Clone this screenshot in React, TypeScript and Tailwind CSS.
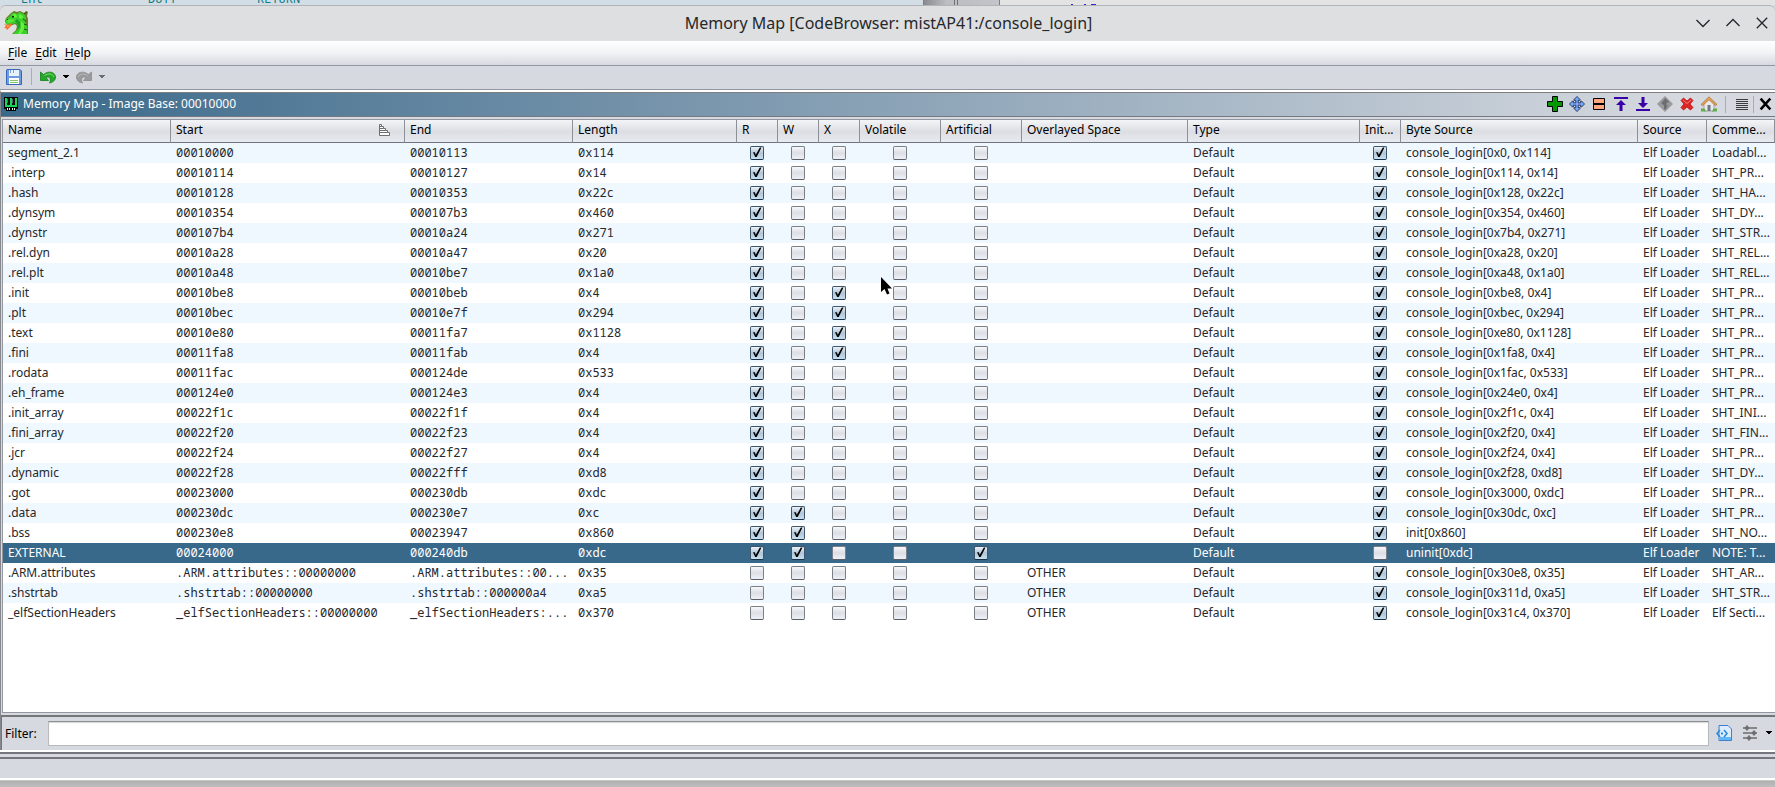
import React from "react";

type Row = {
  name: string;
  start: string;
  end: string;
  length: string;
  flags: string;
  space?: string;
  bytes: string;
  comment: string;
};

// flags: one letter for each ticked box (r, w, x, v = volatile, a = artificial, i = initialized)
const rows: Row[] = [
  { name: "segment_2.1", start: "00010000", end: "00010113", length: "0x114", flags: "ri", bytes: "console_login[0x0, 0x114]", comment: "Loadabl..." },
  { name: ".interp", start: "00010114", end: "00010127", length: "0x14", flags: "ri", bytes: "console_login[0x114, 0x14]", comment: "SHT_PR..." },
  { name: ".hash", start: "00010128", end: "00010353", length: "0x22c", flags: "ri", bytes: "console_login[0x128, 0x22c]", comment: "SHT_HA..." },
  { name: ".dynsym", start: "00010354", end: "000107b3", length: "0x460", flags: "ri", bytes: "console_login[0x354, 0x460]", comment: "SHT_DY..." },
  { name: ".dynstr", start: "000107b4", end: "00010a24", length: "0x271", flags: "ri", bytes: "console_login[0x7b4, 0x271]", comment: "SHT_STR..." },
  { name: ".rel.dyn", start: "00010a28", end: "00010a47", length: "0x20", flags: "ri", bytes: "console_login[0xa28, 0x20]", comment: "SHT_REL..." },
  { name: ".rel.plt", start: "00010a48", end: "00010be7", length: "0x1a0", flags: "ri", bytes: "console_login[0xa48, 0x1a0]", comment: "SHT_REL..." },
  { name: ".init", start: "00010be8", end: "00010beb", length: "0x4", flags: "rxi", bytes: "console_login[0xbe8, 0x4]", comment: "SHT_PR..." },
  { name: ".plt", start: "00010bec", end: "00010e7f", length: "0x294", flags: "rxi", bytes: "console_login[0xbec, 0x294]", comment: "SHT_PR..." },
  { name: ".text", start: "00010e80", end: "00011fa7", length: "0x1128", flags: "rxi", bytes: "console_login[0xe80, 0x1128]", comment: "SHT_PR..." },
  { name: ".fini", start: "00011fa8", end: "00011fab", length: "0x4", flags: "rxi", bytes: "console_login[0x1fa8, 0x4]", comment: "SHT_PR..." },
  { name: ".rodata", start: "00011fac", end: "000124de", length: "0x533", flags: "ri", bytes: "console_login[0x1fac, 0x533]", comment: "SHT_PR..." },
  { name: ".eh_frame", start: "000124e0", end: "000124e3", length: "0x4", flags: "ri", bytes: "console_login[0x24e0, 0x4]", comment: "SHT_PR..." },
  { name: ".init_array", start: "00022f1c", end: "00022f1f", length: "0x4", flags: "ri", bytes: "console_login[0x2f1c, 0x4]", comment: "SHT_INI..." },
  { name: ".fini_array", start: "00022f20", end: "00022f23", length: "0x4", flags: "ri", bytes: "console_login[0x2f20, 0x4]", comment: "SHT_FIN..." },
  { name: ".jcr", start: "00022f24", end: "00022f27", length: "0x4", flags: "ri", bytes: "console_login[0x2f24, 0x4]", comment: "SHT_PR..." },
  { name: ".dynamic", start: "00022f28", end: "00022fff", length: "0xd8", flags: "ri", bytes: "console_login[0x2f28, 0xd8]", comment: "SHT_DY..." },
  { name: ".got", start: "00023000", end: "000230db", length: "0xdc", flags: "ri", bytes: "console_login[0x3000, 0xdc]", comment: "SHT_PR..." },
  { name: ".data", start: "000230dc", end: "000230e7", length: "0xc", flags: "rwi", bytes: "console_login[0x30dc, 0xc]", comment: "SHT_PR..." },
  { name: ".bss", start: "000230e8", end: "00023947", length: "0x860", flags: "rwi", bytes: "init[0x860]", comment: "SHT_NO..." },
  { name: "EXTERNAL", start: "00024000", end: "000240db", length: "0xdc", flags: "rwa", bytes: "uninit[0xdc]", comment: "NOTE: T..." },
  { name: ".ARM.attributes", start: ".ARM.attributes::00000000", end: ".ARM.attributes::00...", length: "0x35", flags: "i", space: "OTHER", bytes: "console_login[0x30e8, 0x35]", comment: "SHT_AR..." },
  { name: ".shstrtab", start: ".shstrtab::00000000", end: ".shstrtab::000000a4", length: "0xa5", flags: "i", space: "OTHER", bytes: "console_login[0x311d, 0xa5]", comment: "SHT_STR..." },
  { name: "_elfSectionHeaders", start: "_elfSectionHeaders::00000000", end: "_elfSectionHeaders:...", length: "0x370", flags: "i", space: "OTHER", bytes: "console_login[0x31c4, 0x370]", comment: "Elf Secti..." },
];

const columns: { label: string; width: string }[] = [
  { label: "Name", width: "w-[168px]" },
  { label: "Start", width: "w-[234px]" },
  { label: "End", width: "w-[168px]" },
  { label: "Length", width: "w-[164px]" },
  { label: "R", width: "w-[41px]" },
  { label: "W", width: "w-[41px]" },
  { label: "X", width: "w-[41px]" },
  { label: "Volatile", width: "w-[81px]" },
  { label: "Artificial", width: "w-[81px]" },
  { label: "Overlayed Space", width: "w-[166px]" },
  { label: "Type", width: "w-[172px]" },
  { label: "Init...", width: "w-[41px]" },
  { label: "Byte Source", width: "w-[237px]" },
  { label: "Source", width: "w-[69px]" },
  { label: "Comme...", width: "w-[68px]" },
];

const cell = "overflow-hidden whitespace-nowrap px-[5px]";
const mono = "font-['Noto_Sans_Mono','DejaVu_Sans_Mono','Liberation_Mono',monospace]";

function Tick({ on, label }: { on: boolean; label: string }) {
  return (
    <td className="p-0">
      <span className="grid h-5 place-items-center pr-0.5">
        <input
          type="checkbox"
          defaultChecked={on}
          aria-label={label}
          className="peer col-start-1 row-start-1 size-[14px] appearance-none rounded-[2px] border border-[#7b7f87] border-b-[#595d66] bg-linear-to-b from-[#f7f8fa] via-[#dcdee4] to-[#eef1f8] checked:border-[#3d566b] checked:border-b-[#16324a] checked:from-[#eef3f8] checked:via-[#b0c6d8] checked:to-[#c8dff0]"
        />
        <svg viewBox="0 0 14 14" className="pointer-events-none invisible col-start-1 row-start-1 size-[14px] peer-checked:visible">
          <path d="M3 6.3h1.8l1 2.4L9.8 1.6h1.7L6.7 11H5.2z" fill="#000" />
        </svg>
      </span>
    </td>
  );
}

function Caret({ color }: { color: string }) {
  return (
    <svg viewBox="0 0 6 4" className="h-1 w-1.5" fill={color}>
      <path d="M0 0h6v1H5v1H4v1H2V2H1V1H0z" />
    </svg>
  );
}

function Tool({ label, children }: { label: string; children: React.ReactNode }) {
  return (
    <button type="button" aria-label={label} className="size-4">
      <svg viewBox="0 0 16 16" className="size-4">
        {children}
      </svg>
    </button>
  );
}

function Dragon() {
  return (
    <svg viewBox="0 0 24 24" className="size-6">
      <path d="M2 7l5-5 3-2 3 1 3-1 4 2 2-2 2 1-1 4 1 3v15H8l4-4 1-4-2-2-5 2-4-2-1-3z" fill="#6b7a2a" />
      <path d="M2 8l4-3 2-3h3l2 1 3-2 5 3 1 4-1 3 2 3v9H9l4-4 1-4-2-3-4 1-3 1-3-1z" fill="#3bcf2c" />
      <path d="M9 3h3l1 3-3 1zM15 3l4 2-1 3-3-1zM17 10l3 3v5l-3 5h-3l3-6z" fill="#64f03c" />
      <path d="M3 9l5-1 3 1-3 2-4 1z" fill="#5ee63a" />
      <path d="M13 8l3 3v5l-3 4 1-6-3-4z" fill="#1f9f24" />
      <path d="M19 8l3 2M20 13l3 1M20 18l3 1M20 3l3-2" stroke="#34480f" strokeWidth="1" />
      <path d="M0 13l3 1 5-2-1 3-4 4-1-2H0l2-2z" fill="#f2702c" />
      <path d="M3 14.500h3l-3 2z" fill="#ffb05a" />
      <path d="M8 5h2v1.500H8z" fill="#17310f" />
      <path d="M3 8h1v1H3z" fill="#17310f" />
    </svg>
  );
}

export default function App() {
  return (
    <div className="relative flex min-h-screen flex-col overflow-hidden bg-[#d6d9df] font-['Noto_Sans',sans-serif] text-xs leading-4 text-black">
      <div className="flex h-[5px] overflow-hidden bg-[#d3dde6]">
        <div className={`flex h-full flex-1 items-end overflow-hidden pb-[3px] pl-[21px] text-xs leading-[6px] text-[#0c7f86] ${mono}`}>
          <span className="w-[127px]">Ent</span>
          <span className="w-[109px]">DUTT</span>
          <span>RETURN</span>
        </div>
        <div className="flex h-full w-[77px] border-x border-[#7d7f86] bg-linear-to-r from-[#8a8b90] via-[#bcbdc3] via-30% to-[#c4c5cb]">
          <span className="ml-[30px] h-full w-1 border-x border-[#6d6f76]" />
        </div>
        <div className="h-full w-[775px] bg-[#e3e3e3]">
          <svg viewBox="0 0 100 5" className="h-[5px] w-[100px]">
            <path d="M71 4h2v1h-2zM84 4h2v1h-2zM91 4h5v1h-5z" fill="#2a2ae0" />
          </svg>
        </div>
      </div>

      <header className="grid h-9 grid-cols-[1fr_auto_1fr] items-center rounded-t-md border-t border-[#b3b4b7] bg-[#dedfe1] pr-[7px] pb-0.5 pl-1">
        <Dragon />
        <h1 className="pl-[5px] text-base text-[#26282b]">Memory Map [CodeBrowser: mistAP41:/console_login]</h1>
        <div className="flex justify-end gap-4">
          <button type="button" aria-label="Minimize">
            <svg viewBox="0 0 14 12" className="h-3 w-3.5" fill="none" stroke="#232629" strokeWidth="1.3"><path d="M.5 3l6.500 6.500L13.500 3" /></svg>
          </button>
          <button type="button" aria-label="Maximize">
            <svg viewBox="0 0 14 12" className="h-3 w-3.5" fill="none" stroke="#232629" strokeWidth="1.3"><path d="M.5 9L7 2.500 13.500 9" /></svg>
          </button>
          <button type="button" aria-label="Close window">
            <svg viewBox="0 0 12 12" className="size-3" fill="none" stroke="#232629" strokeWidth="1.3"><path d="M.8 .8l10.400 10.400M11.200 .8L.8 11.200" /></svg>
          </button>
        </div>
      </header>

      <nav className="flex h-[25px] items-center gap-2 border-b border-[#9297a1] bg-linear-to-b from-white via-[#f1f2f5] to-[#d6d9df] pl-2">
        <button type="button"><u className="underline-offset-2">F</u>ile</button>
        <button type="button"><u className="underline-offset-2">E</u>dit</button>
        <button type="button"><u className="underline-offset-2">H</u>elp</button>
      </nav>

      <div className="flex h-6 items-center border-b border-[#9297a1] pb-0.5 pl-1.5">
        <Tool label="Save">
          <path d="M1 .5h13l1.500 1.500v13.500H.5V1z" fill="#6f9be0" stroke="#3566ba" />
          <path d="M3 1h10v6H3z" fill="#e9f1fc" />
          <path d="M4 1h1v3H4zM7 1h1v3H7z" fill="#7c9fd6" />
          <path d="M3 9h10v6H3z" fill="#fff" />
          <path d="M4 11.500h8M4 13.500h8" stroke="#82c66a" />
        </Tool>
        <span className="mr-2 ml-[9px] h-[17px] w-px bg-[#a9adb6]" />
        <Tool label="Undo">
          <path d="M.5 3v8.500h8L6 8.500c3-1.500 6 1 3.500 5.500 3-.5 6-2.500 6-6C15.500 3.500 9 1 3.500 5.500z" fill="#26a92b" stroke="#128018" strokeWidth=".8" />
          <path d="M4.500 6.500C8 4 13 4.500 14 8" stroke="#7fdc78" fill="none" />
        </Tool>
        <button type="button" aria-label="Undo history" className="ml-[7px]"><Caret color="#000" /></button>
        <span className="w-[7px]" />
        <Tool label="Redo">
          <path d="M15.500 3v8.500h-8L10 8.500c-3-1.500-6 1-3.500 5.500-3-.5-6-2.500-6-6C.5 3.500 7 1 12.500 5.500z" fill="#9a9b9d" stroke="#8b8c8e" strokeWidth=".8" />
          <path d="M2 8c1-3 5-4 9.500-1.500" stroke="#b9babc" fill="none" />
        </Tool>
        <button type="button" aria-label="Redo history" className="ml-[7px]"><Caret color="#6c6d70" /></button>
      </div>

      <main className="flex flex-1 flex-col border-t-2 border-l border-t-white border-l-[#85878c]">
        <div className="flex h-[25px] items-center justify-between border-y border-[#7f7f82] border-b-[#77797f] bg-linear-to-r from-[#39698a] to-[#d6d9df] to-95% pr-0.5 pb-px pl-[3px]">
          <div className="flex items-center gap-[5px]">
            <svg viewBox="0 0 14 14" className="size-[14px]" shapeRendering="crispEdges">
              <path d="M0 0h14v12H12v2H2v-2H0z" fill="#000" />
              <path d="M1 1h12v9H1z" fill="#19d45c" />
              <path d="M3 1h3v7H3zM8 1h3v7H8z" fill="#111" />
              <path d="M3 2h1v4H3zM8 2h1v4H8z" fill="#5a6a60" />
              <path d="M3 11h1v2H3zM5 11h1v2H5zM8 11h1v2H8zM10 11h1v2h-1z" fill="#e7f7e9" />
            </svg>
            <h2 className="text-white">Memory Map - Image Base: 00010000</h2>
          </div>
          <div className="flex items-center gap-1.5">
            <Tool label="Add block">
              <path d="M5.500 .5h5v5h5v5h-5v5h-5v-5h-5v-5h5z" fill="#009a00" stroke="#000" />
            </Tool>
            <Tool label="Move block">
              <path d="M8 .5l3 3v.8H9.200v2.500h2.500V5h.8l3 3-3 3h-.8V9.200H9.200v2.500H11v.8l-3 3-3-3v-.8h1.800V9.200H4.300V11h-.8l-3-3 3-3h.8v1.800h2.500V4.300H5v-.8z" fill="#7aa8ff" stroke="#101c40" strokeWidth=".8" />
            </Tool>
            <Tool label="Split block">
              <path d="M2.500 2.500h11v11h-11z" fill="#ffa67d" stroke="#000" />
              <path d="M2 8h12" stroke="#000" strokeWidth="2" />
            </Tool>
            <Tool label="Expand up">
              <path d="M1 1h14v2H1zM8 4l5 5H9.500v6h-3V9H3z" fill="#3a00a8" />
            </Tool>
            <Tool label="Expand down">
              <path d="M1 13h14v2H1zM8 12l5-5H9.500V1h-3v6H3z" fill="#3a00a8" />
            </Tool>
            <Tool label="Merge blocks">
              <path d="M8 0l8 8-8 8-8-8z" fill="#999a9b" />
              <path d="M8 2.500L11.500 6H9v7H7.500V9L4.500 7M11 9.500L8.500 11" fill="#6c6d6f" stroke="#6c6d6f" />
            </Tool>
            <Tool label="Delete block">
              <path d="M2 4.500L4.500 2 8 5l3.500-3L14 4.500 11 8l3 3.500-2.500 2.500L8 11l-3.500 3L2 11.500 5 8z" fill="#df2626" stroke="#b31212" strokeWidth=".8" />
              <path d="M4 4l4 3.500L12 4" stroke="#f58080" fill="none" />
            </Tool>
            <Tool label="Set image base">
              <path d="M3 7.500L8 3l5 4.500V15H3z" fill="#e9e9ea" stroke="#8b8b8d" strokeWidth=".7" />
              <path d="M6.500 9h3v6h-3z" fill="#707684" />
              <path d="M0 8.500L8 .8l8 7.700-1.500 1L8 3.800 1.500 9.500z" fill="#e6a456" stroke="#a9682c" strokeWidth=".7" />
              <path d="M0 12.500h3.500L5 15.500H0zM16 12.500h-3.500L11 15.500h5z" fill="#5fae48" />
            </Tool>
            <span className="mx-0.5 h-[17px] w-px bg-[#a9adb6]" />
            <div className="flex items-center gap-[3px]">
              <Tool label="Menu">
                <path d="M2 3.500h12M2 5.500h12M2 7.500h12M2 9.500h12M2 11.500h12M2 13.500h12" stroke="#3c3c3e" shapeRendering="crispEdges" />
              </Tool>
              <span className="h-[17px] w-px bg-[#a9adb6]" />
              <Tool label="Close">
                <path d="M4.500 3.500l8 9M12.500 3.500l-8 9" stroke="#000" strokeWidth="2.600" strokeLinecap="square" />
              </Tool>
            </div>
          </div>
        </div>

        <div className="mt-0.5 mb-0.5 ml-px flex-1 overflow-hidden border border-r-0 border-[#9297a1] bg-white">
          <table className="w-full table-fixed border-separate border-spacing-0 text-[#26282b]">
            <thead>
              <tr className="h-[23px] bg-linear-to-b from-[#f4f5f7] via-[#dcdee3] to-[#e9ebf2] text-left text-black">
                {columns.map((c) => (
                  <th key={c.label} scope="col" className={`border-r border-b border-[#8b9099] border-b-[#6f747d] pt-0 pb-0.5 font-normal ${cell} ${c.width}`}>
                    {c.label === "Start" ? (
                      <span className="flex items-center justify-between pr-2">
                        Start
                        <svg viewBox="0 0 12 12" className="size-3" fill="#fff" stroke="#6d6f74">
                          <path d="M.5 .5h2v2h2v2h2v2h2v2h2v3H.5zM.5 2.500h2M.5 4.500h4M.5 6.500h6M.5 8.500h8" />
                        </svg>
                      </span>
                    ) : (
                      c.label
                    )}
                  </th>
                ))}
              </tr>
            </thead>
            <tbody>
              {rows.map((r) => (
                <tr
                  key={r.name}
                  className={r.name === "EXTERNAL" ? "h-5 bg-[#39698a] text-white" : "h-5 odd:bg-[#eff7ff]"}
                >
                  <td className={`py-0 ${cell}`}>{r.name}</td>
                  <td className={`py-0 ${cell} ${mono}`}>{r.start}</td>
                  <td className={`py-0 ${cell} ${mono}`}>{r.end}</td>
                  <td className={`py-0 ${cell} ${mono}`}>{r.length}</td>
                  <Tick on={r.flags.includes("r")} label={`${r.name} read`} />
                  <Tick on={r.flags.includes("w")} label={`${r.name} write`} />
                  <Tick on={r.flags.includes("x")} label={`${r.name} execute`} />
                  <Tick on={r.flags.includes("v")} label={`${r.name} volatile`} />
                  <Tick on={r.flags.includes("a")} label={`${r.name} artificial`} />
                  <td className={`py-0 ${cell}`}>{r.space}</td>
                  <td className={`py-0 ${cell}`}>Default</td>
                  <Tick on={r.flags.includes("i")} label={`${r.name} initialized`} />
                  <td className={`py-0 ${cell}`}>{r.bytes}</td>
                  <td className={`py-0 ${cell}`}>Elf Loader</td>
                  <td className={`py-0 ${cell}`}>{r.comment}</td>
                </tr>
              ))}
            </tbody>
          </table>
        </div>

        <div className="flex h-[35px] items-center border-t-2 border-l border-[#74767b] pr-[3px] pl-[3px]">
          <label htmlFor="filter" className="w-[43px]">Filter:</label>
          <input id="filter" type="text" className="h-[25px] min-w-0 flex-1 border border-[#b9babd] border-t-[#8d8e91] bg-white px-1 shadow-[inset_0_1px_1px_#d5d5d7] outline-none" />
          <div className="mb-0.5 ml-[7px] flex items-center gap-2.5">
            <Tool label="Filter columns">
              <path d="M3 .5h9L15.500 4v11.500H3z" fill="#dcecfb" stroke="#3d7fd0" />
              <path d="M4 12h11v3H4z" fill="#62b7f4" />
              <path d="M4 5L1 8.500 4 12M8 5l3 3.500L8 12" stroke="#2f8be0" strokeWidth="1.600" fill="none" />
              <path d="M5 8.500h2" stroke="#2f8be0" strokeWidth="2" />
            </Tool>
            <Tool label="Filter options">
              <path d="M1 3h14M1 8h14M1 13h14" stroke="#858688" strokeWidth="2" />
              <path d="M3 3l2-2.500L7 3 5 5.500zM10 8l2-2.500L14 8l-2 2.500zM5 13l2-2.500L9 13l-2 2.500z" fill="#6d6e70" stroke="#6d6e70" />
            </Tool>
            <button type="button" aria-label="Filter menu" className="-ml-0.5"><Caret color="#000" /></button>
          </div>
        </div>
      </main>

      <div className="h-1 border-t-2 border-b-2 border-t-white border-b-[#74767b]" />
      <footer className="mt-[3px] h-[23px] border-t-2 border-b-2 border-t-[#74767b] border-b-white" />
      <div className="h-[7px] border-t border-[#c6c6c6] bg-linear-to-b from-[#b0b0b0] to-[#bebebe]" />

      <svg viewBox="0 0 12 20" className="pointer-events-none absolute top-[277px] left-[880px] h-5 w-3">
        <path d="M.5 0v16.500l4-3 2.500 6 3.500-1.500-2.500-5.500H12z" fill="#fff" opacity=".7" />
        <path d="M1 0v15l3.500-3 2.500 5.500 2.500-1L7.500 11.500H12z" fill="#000" />
      </svg>
    </div>
  );
}
